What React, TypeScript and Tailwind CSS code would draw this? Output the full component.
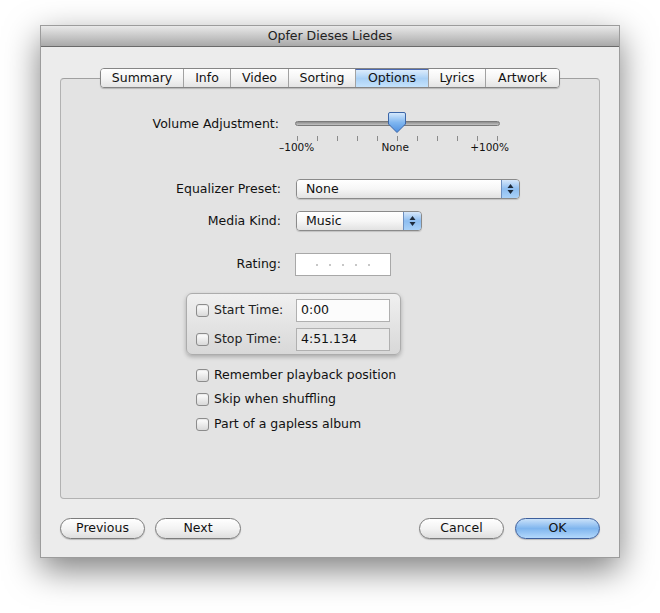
import React from 'react';

const font = { fontFamily: '"DejaVu Sans", "Liberation Sans", sans-serif' };

const tabs = [
  { name: 'Summary', w: 'w-[82px]' },
  { name: 'Info', w: 'w-[47px]' },
  { name: 'Video', w: 'w-[58px]' },
  { name: 'Sorting', w: 'w-[67px]' },
  { name: 'Options', w: 'w-[73px]', active: true },
  { name: 'Lyrics', w: 'w-[57px]' },
  { name: 'Artwork', w: 'w-[74px]' },
];

const options = [
  { label: 'Remember playback position', mt: '' },
  { label: 'Skip when shuffling', mt: 'mt-[8px]' },
  { label: 'Part of a gapless album', mt: 'mt-[9px]' },
];

function Checkbox() {
  return (
    <span className="w-[13px] h-[13px] shrink-0 rounded-[3px] border border-[#8c8c8c] bg-gradient-to-b from-[#ffffff] to-[#d9d9d9] shadow-[inset_0_1px_1px_rgba(0,0,0,0.08)]" />
  );
}

function Arrows() {
  return (
    <svg width="7" height="12" viewBox="0 0 7 12">
      <path d="M3.5 1 L6.5 5 L0.5 5 Z" fill="#1d2a3a" />
      <path d="M3.5 11 L6.5 7 L0.5 7 Z" fill="#1d2a3a" />
    </svg>
  );
}

function Popup({ value, w }: { value: string; w: string }) {
  return (
    <div className={`${w} h-[20px] flex rounded-[4px] border border-[#8a8a8a] overflow-hidden shadow-[0_1px_1px_rgba(0,0,0,0.15)]`}>
      <div className="flex-1 flex items-center pl-[9px] text-[12.5px] text-[#111] bg-gradient-to-b from-[#ffffff] via-[#f6f6f6] to-[#e2e2e2]">
        {value}
      </div>
      <div className="w-[18px] flex items-center justify-center border-l border-[#6d8fbf] bg-gradient-to-b from-[#d6e7fa] via-[#8dbdf0] to-[#a9d1f8]">
        <Arrows />
      </div>
    </div>
  );
}

function PillButton({ label, w, blue }: { label: string; w: string; blue?: boolean }) {
  return (
    <button
      className={`${w} h-[21px] rounded-full border text-[12.5px] text-[#111] flex items-center justify-center shadow-[0_1px_1px_rgba(0,0,0,0.2)] ${
        blue
          ? 'border-[#3d5f9c] bg-gradient-to-b from-[#c9e1f9] via-[#7fb5ee] to-[#b3d8fb]'
          : 'border-[#7c7c7c] bg-gradient-to-b from-[#ffffff] via-[#f3f3f3] to-[#dedede]'
      }`}
    >
      {label}
    </button>
  );
}

export default function App() {
  return (
    <div className="w-[660px] h-[613px] bg-white pt-[25px] pl-[40px]" style={font}>
      <div className="w-[580px] h-[533px] flex flex-col bg-[#ececec] border border-[#9c9c9c] shadow-[0_12px_32px_rgba(0,0,0,0.5)]">
        {/* title bar */}
        <div className="h-[21px] shrink-0 flex items-center justify-center border-b border-[#6a6a6a] bg-gradient-to-b from-[#e9e9e9] to-[#a9a9a9] text-[12.5px] text-[#222]">
          Opfer Dieses Liedes
        </div>

        <div className="flex-1 flex flex-col pt-[21px] px-[19px]">
          {/* tabs */}
          <div className="relative z-10 self-center flex h-[20px] rounded-[4px] border border-[#858585] overflow-hidden shadow-[0_1px_1px_rgba(0,0,0,0.2)]">
            {tabs.map((t, i) => (
              <div
                key={t.name}
                className={`${t.w} flex items-center justify-center text-[12.5px] text-[#111] ${i > 0 ? 'border-l border-[#a2a2a2]' : ''} ${
                  t.active
                    ? 'bg-gradient-to-b from-[#dcecfc] via-[#a9d0f5] to-[#c5e3fc] border-t border-t-[#4a68b0]'
                    : 'bg-gradient-to-b from-[#ffffff] via-[#f5f5f5] to-[#e4e4e4]'
                }`}
              >
                {t.name}
              </div>
            ))}
          </div>

          {/* group box */}
          <div className="-mt-[10px] h-[421px] rounded-[4px] border border-[#b2b2b2] border-t-[#a0a0a0] bg-[#e3e3e3] pt-[32px] flex flex-col">
            {/* volume */}
            <div className="flex items-start">
              <div className="w-[218px] text-right text-[12.5px] leading-[16px] mt-[5px] text-[#111]">Volume Adjustment:</div>
              <div className="relative w-[230px] h-[42px]">
                <div className="absolute left-[16px] top-[10px] w-[205px] h-[5px] rounded-full bg-gradient-to-b from-[#8d8d8d] to-[#c4c4c4] border border-[#7a7a7a]" />
                <div className="absolute left-[18px] top-[25px] w-[201px] h-[5px] flex justify-between">
                  {Array.from({ length: 11 }).map((_, i) => (
                    <span key={i} className="w-px h-full bg-[#8a8a8a]" />
                  ))}
                </div>
                <svg className="absolute left-[108px] top-0" width="20" height="23" viewBox="0 0 20 23">
                  <defs>
                    <linearGradient id="th" x1="0" y1="0" x2="0" y2="1">
                      <stop offset="0" stopColor="#d9ebfd" />
                      <stop offset="0.5" stopColor="#7fb6f0" />
                      <stop offset="1" stopColor="#4d8fe0" />
                    </linearGradient>
                  </defs>
                  <path d="M3 1.5 H17 Q18.5 1.5 18.5 3 V13 L10 21.5 L1.5 13 V3 Q1.5 1.5 3 1.5 Z" fill="url(#th)" stroke="#3c66a8" strokeWidth="1" />
                </svg>
                <div className="absolute left-0 top-[30px] w-[230px] flex justify-between text-[10.5px] leading-[12px] text-[#111]">
                  <span>–100%</span>
                  <span className="pl-[6px]">None</span>
                  <span>+100%</span>
                </div>
              </div>
            </div>

            {/* equalizer */}
            <div className="flex items-center mt-[26px] gap-[15px]">
              <div className="w-[220px] text-right text-[12.5px] text-[#111]">Equalizer Preset:</div>
              <Popup value="None" w="w-[224px]" />
            </div>

            <div className="flex items-center mt-[12px] gap-[15px]">
              <div className="w-[220px] text-right text-[12.5px] text-[#111]">Media Kind:</div>
              <Popup value="Music" w="w-[126px]" />
            </div>

            <div className="flex items-center mt-[22px] gap-[14px]">
              <div className="w-[220px] text-right text-[12.5px] text-[#111]">Rating:</div>
              <div className="w-[96px] h-[23px] bg-white border border-[#a8a8a8] flex items-center justify-center gap-[11px]">
                {Array.from({ length: 5 }).map((_, i) => (
                  <span key={i} className="w-[2px] h-[2px] rounded-full bg-[#b5b5b5]" />
                ))}
              </div>
            </div>

            {/* time box */}
            <div className="ml-[125px] mt-[17px] w-[215px] h-[62px] rounded-[6px] border border-[#acacac] bg-gradient-to-b from-[#f0f0f0] to-[#d8d8d8] shadow-[0_2px_4px_rgba(0,0,0,0.25)] pt-[5px] pl-[9px] flex flex-col gap-[6px]">
              <div className="flex items-center">
                <Checkbox />
                <span className="ml-[5px] w-[82px] text-[12.5px] text-[#222]">Start Time:</span>
                <div className="w-[94px] h-[23px] bg-[#fcfcfc] border border-[#b0b0b0] flex items-center pl-[4px] text-[12.5px] text-[#111]">0:00</div>
              </div>
              <div className="flex items-center">
                <Checkbox />
                <span className="ml-[5px] w-[82px] text-[12.5px] text-[#222]">Stop Time:</span>
                <div className="w-[94px] h-[23px] bg-[#e9e9e9] border border-[#b0b0b0] flex items-center pl-[4px] text-[12.5px] text-[#111]">4:51.134</div>
              </div>
            </div>

            {/* checkboxes */}
            <div className="ml-[135px] mt-[12px] flex flex-col">
              {options.map(o => (
                <div key={o.label} className={`flex items-center h-[16px] ${o.mt}`}>
                  <Checkbox />
                  <span className="ml-[5px] text-[12.5px] text-[#111]">{o.label}</span>
                </div>
              ))}
            </div>
          </div>

          {/* buttons */}
          <div className="mt-[19px] flex items-center">
            <PillButton label="Previous" w="w-[85px]" />
            <div className="w-[10px]" />
            <PillButton label="Next" w="w-[86px]" />
            <div className="flex-1" />
            <PillButton label="Cancel" w="w-[85px]" />
            <div className="w-[11px]" />
            <PillButton label="OK" w="w-[85px]" blue />
          </div>
        </div>
      </div>
    </div>
  );
}
